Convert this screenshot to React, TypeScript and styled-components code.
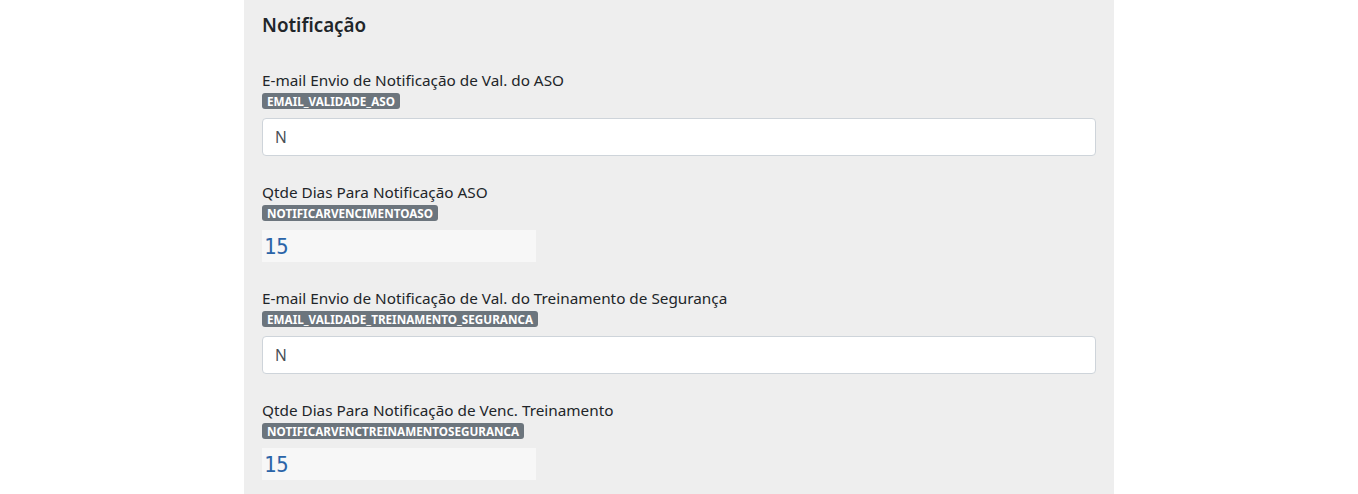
import React from 'react';
import styled, {createGlobalStyle} from 'styled-components';

const GlobalStyle = createGlobalStyle`
  html, body {
    margin: 0;
    padding: 0;
    background: #ffffff;
  }
  body {
    font-family: "Noto Sans", "Open Sans", sans-serif;
    color: #212529;
  }
`;

interface Field {
  label: string;
  code: string;
  value: string;
  kind: 'input' | 'number';
}

const fields: Field[] = [
  {label: 'E-mail Envio de Notificação de Val. do ASO', code: 'EMAIL_VALIDADE_ASO', value: 'N', kind: 'input'},
  {label: 'Qtde Dias Para Notificação ASO', code: 'NOTIFICARVENCIMENTOASO', value: '15', kind: 'number'},
  {
    label: 'E-mail Envio de Notificação de Val. do Treinamento de Segurança',
    code: 'EMAIL_VALIDADE_TREINAMENTO_SEGURANCA',
    value: 'N',
    kind: 'input',
  },
  {
    label: 'Qtde Dias Para Notificação de Venc. Treinamento',
    code: 'NOTIFICARVENCTREINAMENTOSEGURANCA',
    value: '15',
    kind: 'number',
  },
];

const App = () => {
  return (
    <>
      <GlobalStyle />
      <Page>
        <Panel>
          <Title>Notificação</Title>
          <FieldList>
            {fields.map((field) => (
              <FieldGroup key={field.code}>
                <Label>{field.label}</Label>
                <Badge>{field.code}</Badge>
                {field.kind === 'input' ? (
                  <TextInput readOnly value={field.value} />
                ) : (
                  <NumberValue>{field.value}</NumberValue>
                )}
              </FieldGroup>
            ))}
          </FieldList>
        </Panel>
      </Page>
    </>
  );
};

const Page = styled.div`
  display: flex;
  justify-content: center;
  height: 494px;
  overflow: hidden;
`;

const Panel = styled.section`
  width: 870px;
  background: #eeeeee;
  padding: 12px 18px 0 18px;
  box-sizing: border-box;
`;

const Title = styled.h3`
  margin: 0;
  font-size: 18.8px;
  line-height: 26px;
  font-weight: 600;
  color: #212529;
`;

const FieldList = styled.div`
  display: flex;
  flex-direction: column;
  gap: 25px;
  margin-top: 31px;
`;

const FieldGroup = styled.div`
  display: flex;
  flex-direction: column;
  align-items: flex-start;
`;

const Label = styled.label`
  font-size: 15.3px;
  line-height: 22px;
  color: #212529;
`;

const Badge = styled.span`
  margin-top: 2px;
  margin-bottom: 9px;
  height: 16px;
  line-height: 16px;
  padding: 0 5px;
  border-radius: 3px;
  background: #6c757d;
  color: #ffffff;
  font-size: 11.7px;
  font-weight: 700;
`;

const TextInput = styled.input`
  width: 834px;
  height: 38px;
  box-sizing: border-box;
  padding: 0 12px;
  border: 1px solid #ced4da;
  border-radius: 4px;
  background: #ffffff;
  font-family: "Noto Sans", "Open Sans", sans-serif;
  font-size: 15.5px;
  color: #495057;
  outline: none;
`;

const NumberValue = styled.div`
  width: 274px;
  height: 32px;
  box-sizing: border-box;
  padding: 0 2px;
  background: #f7f7f7;
  font-family: "DejaVu Sans Mono", "Liberation Mono", monospace;
  font-size: 20.5px;
  line-height: 34px;
  color: #2a64a8;
  overflow: hidden;
`;

export default App;
